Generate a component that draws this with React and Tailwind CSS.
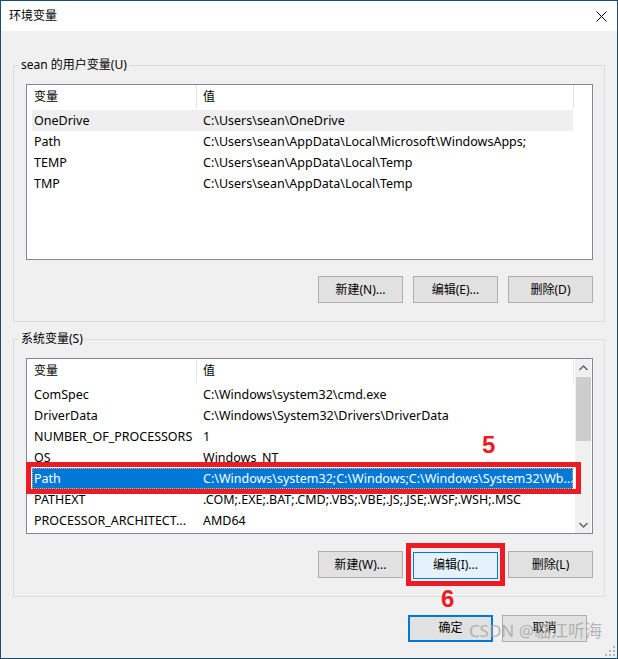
import React from 'react';

const userVars = [
  ['OneDrive', 'C:\\Users\\sean\\OneDrive'],
  ['Path', 'C:\\Users\\sean\\AppData\\Local\\Microsoft\\WindowsApps;'],
  ['TEMP', 'C:\\Users\\sean\\AppData\\Local\\Temp'],
  ['TMP', 'C:\\Users\\sean\\AppData\\Local\\Temp'],
];

const sysVars = [
  ['ComSpec', 'C:\\Windows\\system32\\cmd.exe'],
  ['DriverData', 'C:\\Windows\\System32\\Drivers\\DriverData'],
  ['NUMBER_OF_PROCESSORS', '1'],
  ['OS', 'Windows_NT'],
  ['Path', 'C:\\Windows\\system32;C:\\Windows;C:\\Windows\\System32\\Wb...'],
  ['PATHEXT', '.COM;.EXE;.BAT;.CMD;.VBS;.VBE;.JS;.JSE;.WSF;.WSH;.MSC'],
  ['PROCESSOR_ARCHITECT...', 'AMD64'],
];

const font = { fontFamily: '"Noto Sans", "Noto Sans CJK SC", sans-serif' };

const Btn = ({ children, className = '' }) => (
  <button className={`h-[27px] w-[85px] border text-[12px] text-black leading-none ${className || 'border-[#adadad] bg-[#e1e1e1]'}`}>
    {children}
  </button>
);

const Chevron = ({ up }) => (
  <svg width="9" height="6" viewBox="0 0 9 6" className="text-[#606060]">
    <path d={up ? 'M0.5 5L4.5 1L8.5 5' : 'M0.5 1L4.5 5L8.5 1'} fill="none" stroke="currentColor" strokeWidth="1.4" />
  </svg>
);

const Scrollbar = () => (
  <div className="w-[17px] bg-[#f0f0f0] flex flex-col items-center border-r border-white">
    <div className="h-[18px] flex items-center justify-center">
      <Chevron up />
    </div>
    <div className="w-[15px] h-[64px] bg-[#cdcdcd]" />
    <div className="flex-1" />
    <div className="h-[17px] flex items-center justify-center">
      <Chevron />
    </div>
  </div>
);

// list view: header + rows; selRow gets the blue selection and the red "5" markup
const VarList = ({ rows, hoverRow, selRow, scroll }) => (
  <div className="ml-[7px] h-[176px] border border-[#828790] bg-white flex">
    <div className="flex-1 min-w-0 flex flex-col">
      <div className="flex h-[24px] text-[12px]">
        <div className="w-[170px] border-r border-[#e5e5e5] pl-[7px] flex items-center">变量</div>
        <div className="w-[377px] border-r border-[#e5e5e5] pl-[6px] flex items-center">值</div>
      </div>
      <div className="mt-px pl-[5px] flex flex-col">
        {rows.map(([name, value], i) => {
          const sel = i === selRow;
          const hover = i === hoverRow;
          return (
            <div
              key={name}
              className={`relative w-[541px] h-[21px] pt-px flex items-center text-[12.5px] whitespace-nowrap ${
                sel ? 'bg-[#0078d7] text-white outline-1 outline-dotted outline-[#f0b070] -outline-offset-1' : hover ? 'bg-[#efefef]' : ''
              }`}
            >
              <div className="w-[171px] pl-[2px] overflow-hidden">{name}</div>
              <div className="flex-1 overflow-hidden">{value}</div>
              {sel && (
                <>
                  <div className="absolute -left-[6px] -right-[8px] -top-[6px] -bottom-[5px] border-[5px] border-[#ed1c24]" />
                  <div
                    className="absolute left-[450px] -top-[35px] text-[24px] leading-[24px] font-bold text-[#ed1c24]"
                    style={{ fontFamily: '"Liberation Sans", sans-serif' }}
                  >
                    5
                  </div>
                </>
              )}
            </div>
          );
        })}
      </div>
    </div>
    {scroll && <Scrollbar />}
  </div>
);

const Group = ({ label, children, className = '' }) => (
  <fieldset className={`mx-3 border border-[#dcdcdc] pl-[5px] pr-[11px] pt-[11px] pb-[18px] ${className}`}>
    <legend className="px-[2px] text-[12px] leading-[16px]">{label}</legend>
    {children}
  </fieldset>
);

export default function App() {
  return (
    <div className="w-[618px] h-[659px] border border-[#1b4d70] bg-[#f0f0f0] flex flex-col text-black" style={font}>
      <div className="h-[30px] bg-white flex items-center justify-between pl-[8px] pr-[10px]">
        <span className="text-[12px]">环境变量</span>
        <svg width="11" height="11" viewBox="0 0 11 11">
          <path d="M0.5 0.5L10.5 10.5M10.5 0.5L0.5 10.5" stroke="#000" strokeWidth="1" />
        </svg>
      </div>

      <Group label="sean 的用户变量(U)" className="mt-[26px]">
        <VarList rows={userVars} hoverRow={0} />
        <div className="mt-[16px] flex justify-end gap-[10px]">
          <Btn>新建(N)...</Btn>
          <Btn>编辑(E)...</Btn>
          <Btn>删除(D)</Btn>
        </div>
      </Group>

      <Group label="系统变量(S)" className="mt-[9px] !pb-[17px]">
        <VarList rows={sysVars} selRow={4} scroll />
        <div className="mt-[17px] flex justify-end gap-[10px]">
          <Btn>新建(W)...</Btn>
          <div className="relative">
            <Btn className="border-[#0078d7] bg-[#e5f1fb]">编辑(I)...</Btn>
            <div className="absolute -left-[7px] -right-[7px] -top-[8px] -bottom-[7px] border-[5px] border-[#ed1c24]" />
            <div
              className="absolute left-[28px] top-[36px] text-[24px] leading-[24px] font-bold text-[#ed1c24]"
              style={{ fontFamily: '"Liberation Sans", sans-serif' }}
            >
              6
            </div>
          </div>
          <Btn>删除(L)</Btn>
        </div>
      </Group>

      <div className="relative mt-[18px] mr-[30px] flex justify-end gap-[9px]">
        <Btn className="border-2 border-[#0078d7] bg-[#e1e1e1]">确定</Btn>
        <Btn>取消</Btn>
        <div className="pointer-events-none absolute -right-[15px] top-[6px] text-[17px] leading-[20px] text-[#a0a0a0]/75 whitespace-nowrap" style={{ fontFamily: '"Noto Sans", "Noto Sans CJK SC", sans-serif' }}>
          CSDN @临江听海
        </div>
      </div>

      <div className="flex-1 flex items-end justify-end pr-[2px] pb-[2px]">
        <svg width="10" height="10" viewBox="0 0 10 10" fill="#b8b8b8">
          <rect x="8" y="0" width="2" height="2" />
          <rect x="4" y="4" width="2" height="2" />
          <rect x="8" y="4" width="2" height="2" />
          <rect x="0" y="8" width="2" height="2" />
          <rect x="4" y="8" width="2" height="2" />
          <rect x="8" y="8" width="2" height="2" />
        </svg>
      </div>
    </div>
  );
}
